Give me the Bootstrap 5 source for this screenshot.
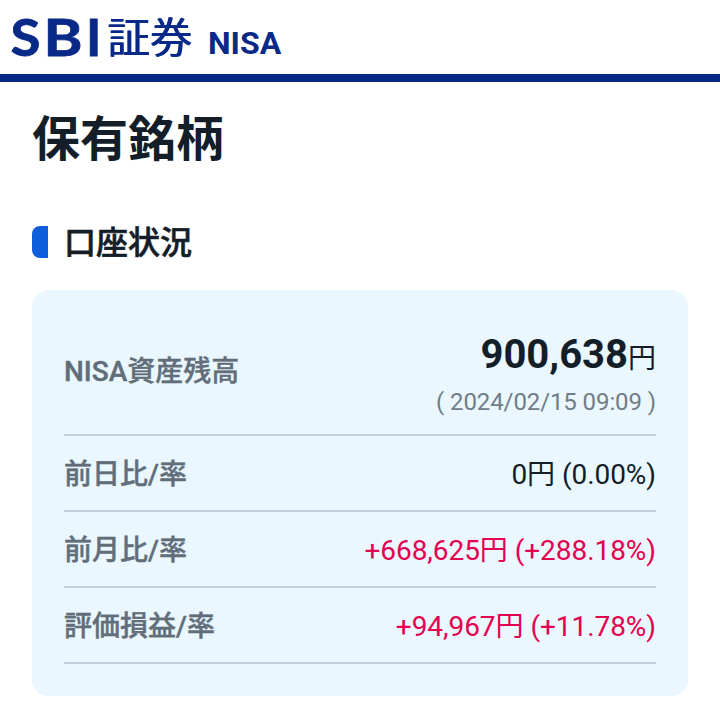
<!DOCTYPE html>
<html lang="ja">
<head>
<meta charset="utf-8">
<meta name="viewport" content="width=device-width, initial-scale=1">
<title>SBI証券 NISA</title>
<link href="https://cdn.jsdelivr.net/npm/bootstrap@5.3.0/dist/css/bootstrap.min.css" rel="stylesheet">
<style>
  body { font-family: Roboto, "Noto Sans CJK JP", sans-serif; color: #131e29; font-size: 28px; line-height: 1.5; background: #fff; }
  .site-head { height: 82px; border-bottom: 8px solid #082987; color: #082987; }
  .brand-logo { width: 200px; height: 74px; fill: #082987; }
  .brand-kanji { filter: drop-shadow(1.4px 0 0 #082987); }
  .brand-sub { font-size: 32px; font-weight: 700; line-height: 38px; margin: 24px 0 0 8px; }
  .page-title { font-size: 48px; font-weight: 700; line-height: 72px; padding-top: 22px; }
  .section-title { font-size: 32px; font-weight: 500; line-height: 48px; margin-top: 42px; -webkit-text-stroke: .6px #131e29; }
  .section-title span:last-child { padding-top: 2px; line-height: 46px; }
  .section-mark { width: 16px; height: 32px; background: #0f5fdc; border-radius: 8px 0 0 8px; margin-right: 16px; }
  .balance-panel { background: #eaf7fe; border-radius: 16px; height: 406px; margin-top: 24px; padding: 20px 32px 0; }
  .balance-row { height: 76px; padding-top: 4px; border-bottom: 2px solid #c0cddb; }
  .balance-row-main { height: 126px; }
  .balance-row-main .row-label { padding-bottom: 5px; }
  .row-label { color: #616e7a; font-weight: 500; -webkit-text-stroke: .4px #616e7a; }
  .row-value { letter-spacing: -.05px; }
  .total { font-size: 40px; font-weight: 700; line-height: 52px; padding-top: 1px; margin-bottom: -1px; }
  .yen { font-size: 28px; font-weight: 400; }
  .stamp { font-size: 24px; line-height: 36px; color: #707d88; letter-spacing: -.1px; }
  .gain { color: #e5004f; }
</style>
</head>
<body>
<header class="site-head d-flex align-items-start">
  <svg class="brand-logo" viewBox="0 0 200 74" role="img" aria-label="SBI証券">
    <g font-family="Lato" font-size="52" font-weight="700" stroke="#082987" stroke-width=".8">
      <text transform="translate(10.5 55.5) scale(1.05 1)">S</text>
      <text transform="translate(43.5 55.5) scale(1.14 1)">B</text>
      <text x="86" y="55.5">I</text>
    </g>
    <text class="brand-kanji" x="107" y="53" font-family="Noto Sans CJK JP" font-size="42.5">証券</text>
  </svg>
  <span class="brand-sub">NISA</span>
</header>
<main class="px-4">
  <div class="px-2">
    <h1 class="page-title mb-0">保有銘柄</h1>
    <h2 class="section-title d-flex align-items-center mb-0"><span class="section-mark"></span><span>口座状況</span></h2>
    <section class="balance-panel">
      <div class="balance-row balance-row-main d-flex justify-content-between align-items-center">
        <div class="row-label">NISA資産残高</div>
        <div class="text-end">
          <div class="total">900,638<span class="yen">円</span></div>
          <div class="stamp">( 2024/02/15 09:09 )</div>
        </div>
      </div>
      <div class="balance-row d-flex justify-content-between align-items-center">
        <div class="row-label">前日比/率</div><div class="row-value">0円 (0.00%)</div>
      </div>
      <div class="balance-row d-flex justify-content-between align-items-center">
        <div class="row-label">前月比/率</div><div class="row-value gain">+668,625円 (+288.18%)</div>
      </div>
      <div class="balance-row d-flex justify-content-between align-items-center">
        <div class="row-label">評価損益/率</div><div class="row-value gain">+94,967円 (+11.78%)</div>
      </div>
    </section>
  </div>
</main>
<script src="https://cdn.jsdelivr.net/npm/bootstrap@5.3.0/dist/js/bootstrap.bundle.min.js"></script>
</body>
</html>
